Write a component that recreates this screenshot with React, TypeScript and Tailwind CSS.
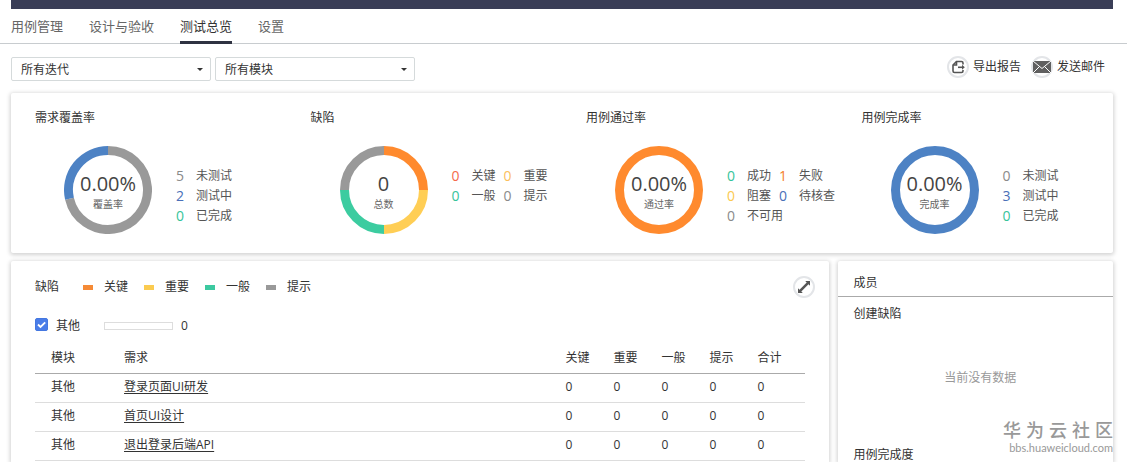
import React, { useState } from 'react'

type Segment = { value: number; color: string }
type LegendItem = { count: number; label: string; color: string }
type Stat = {
  title: string
  value: string
  caption: string
  segments: Segment[]
  legend: LegendItem[]
  twoColumns?: boolean
}

const stats: Stat[] = [
  {
    title: '需求覆盖率',
    value: '0.00%',
    caption: '覆盖率',
    segments: [{ value: 5, color: '#999999' }, { value: 2, color: '#4d82c4' }],
    legend: [
      { count: 5, label: '未测试', color: 'text-[#8a8a8a]' },
      { count: 2, label: '测试中', color: 'text-[#4a6fb8]' },
      { count: 0, label: '已完成', color: 'text-[#36c49a]' },
    ],
  },
  {
    title: '缺陷',
    value: '0',
    caption: '总数',
    segments: [
      { value: 1, color: '#ff8a2e' },
      { value: 1, color: '#ffce55' },
      { value: 1, color: '#3ccca0' },
      { value: 1, color: '#999999' },
    ],
    legend: [
      { count: 0, label: '关键', color: 'text-[#f5694a]' },
      { count: 0, label: '重要', color: 'text-[#fbc05c]' },
      { count: 0, label: '一般', color: 'text-[#36c49a]' },
      { count: 0, label: '提示', color: 'text-[#8a8a8a]' },
    ],
    twoColumns: true,
  },
  {
    title: '用例通过率',
    value: '0.00%',
    caption: '通过率',
    segments: [{ value: 1, color: '#ff8a2e' }],
    legend: [
      { count: 0, label: '成功', color: 'text-[#36c49a]' },
      { count: 1, label: '失败', color: 'text-[#f5802a]' },
      { count: 0, label: '阻塞', color: 'text-[#fbc94f]' },
      { count: 0, label: '待核查', color: 'text-[#4a6fb8]' },
      { count: 0, label: '不可用', color: 'text-[#8a8a8a]' },
    ],
    twoColumns: true,
  },
  {
    title: '用例完成率',
    value: '0.00%',
    caption: '完成率',
    segments: [{ value: 1, color: '#4d82c4' }],
    legend: [
      { count: 0, label: '未测试', color: 'text-[#8a8a8a]' },
      { count: 3, label: '测试中', color: 'text-[#4a6fb8]' },
      { count: 0, label: '已完成', color: 'text-[#36c49a]' },
    ],
  },
]

const tabs = ['用例管理', '设计与验收', '测试总览', '设置']

const levels = [
  { label: '关键', color: 'bg-[#f58a36]' },
  { label: '重要', color: 'bg-[#fbcb50]' },
  { label: '一般', color: 'bg-[#3cc9a0]' },
  { label: '提示', color: 'bg-[#999999]' },
]

const rows = [
  { module: '其他', name: '登录页面UI研发', counts: [0, 0, 0, 0, 0] },
  { module: '其他', name: '首页UI设计', counts: [0, 0, 0, 0, 0] },
  { module: '其他', name: '退出登录后端API', counts: [0, 0, 0, 0, 0] },
]

const RADIUS = 39.5

// point on the ring, clockwise from twelve o'clock
function pointAt(fraction: number) {
  const angle = fraction * 2 * Math.PI
  return `${44 + RADIUS * Math.sin(angle)} ${44 - RADIUS * Math.cos(angle)}`
}

function Donut({ segments }: { segments: Segment[] }) {
  const total = segments.reduce((sum, s) => sum + s.value, 0)
  let start = 0
  return (
    <svg viewBox="0 0 88 88" className="col-start-1 row-start-1 size-[88px]" fill="none" strokeWidth="9" aria-hidden="true">
      {segments.map((s, i) => {
        const share = s.value / total
        if (share === 1) return <circle key={i} cx="44" cy="44" r={RADIUS} stroke={s.color} />
        const from = pointAt(start)
        start += share
        return <path key={i} d={`M${from}A${RADIUS} ${RADIUS} 0 ${share > 0.5 ? 1 : 0} 1 ${pointAt(start)}`} stroke={s.color} />
      })}
    </svg>
  )
}

function StatPanel({ stat }: { stat: Stat }) {
  return (
    <section className="pl-6">
      <h2 className="text-xs leading-4 text-[#333]">{stat.title}</h2>
      <div className="mt-5 flex items-start pl-[29px]">
        <div className="grid shrink-0 place-items-center">
          <Donut segments={stat.segments} />
          <div className="col-start-1 row-start-1 flex flex-col items-center pt-1">
            <span className="text-xl leading-6 text-[#444]">{stat.value}</span>
            <span className="text-[10px] leading-4 text-[#666]">{stat.caption}</span>
          </div>
        </div>
        <ul className={stat.twoColumns ? 'mt-5 ml-6 grid grid-cols-[auto_auto] gap-x-2' : 'mt-5 ml-6 grid'}>
          {stat.legend.map(item => (
            <li key={item.label} className="flex h-5 items-center text-xs text-[#555]">
              <span className={`w-5 text-sm ${item.color}`}>{item.count}</span>
              <span className={item.label === '不可用' ? 'w-6 whitespace-nowrap' : 'whitespace-nowrap'}>{item.label}</span>
            </li>
          ))}
        </ul>
      </div>
    </section>
  )
}

function Dropdown({ label }: { label: string }) {
  return (
    <div className="grid w-[200px] items-center">
      <select aria-label={label} className="col-start-1 row-start-1 h-6 appearance-none rounded-xs border border-[#d5dadb] bg-white pt-px pl-[9px] text-xs text-[#333]">
        <option>{label}</option>
      </select>
      <svg viewBox="0 0 6 3" className="pointer-events-none col-start-1 row-start-1 mr-2 h-[3px] w-[6px] justify-self-end" aria-hidden="true">
        <path d="M0 0h6L3 3z" fill="#333" />
      </svg>
    </div>
  )
}

function IconCircle({ children }: { children: React.ReactNode }) {
  return (
    <span className="flex size-[22px] items-center justify-center rounded-full border-2 border-[#e3e5e8] bg-white">{children}</span>
  )
}

export default function App() {
  const [active, setActive] = useState('测试总览')
  const [checked, setChecked] = useState(true)

  return (
    <div className="flex h-screen flex-col overflow-hidden bg-white font-['Open_Sans','Noto_Sans_CJK_SC',sans-serif] text-[#333]">
      <div className="mr-[14px] ml-[11px] h-[9px] shrink-0 bg-[#3a3e57]" />
      <nav className="flex h-[35px] shrink-0 gap-[26px] border-b border-[#c8cccf] pl-[11px]">
        {tabs.map(tab => (
          <button key={tab} onClick={() => setActive(tab)}
            className={tab === active
              ? '-mb-px border-b-3 border-[#2f3241] pt-1 text-[13px] text-[#333]'
              : '-mb-px border-b-3 border-transparent pt-1 text-[13px] text-[#666]'}>
            {tab}
          </button>
        ))}
      </nav>

      <div className="flex min-h-0 flex-1 flex-col pr-[14px] pl-[11px]">
        <div className="mt-[13px] flex h-6 items-start justify-between">
          <div className="flex gap-1">
            <Dropdown label="所有迭代" />
            <Dropdown label="所有模块" />
          </div>
          <div className="-mt-[2px] flex gap-[10px] pr-2">
            <button className="flex items-center gap-1 text-xs leading-6">
              <IconCircle>
                <svg viewBox="0 0 14 14" className="size-[14px] shrink-0" fill="none" stroke="#555" strokeWidth="1.6" aria-hidden="true">
                  <path d="M12 4.5V3q0-1.5-1.5-1.5H5.5L2 5v6q0 1.5 1.5 1.5h7Q12 12.500 12 11v-1" />
                  <path d="M5.500 1.500V5H2" />
                  <path d="M7 7.300h5" />
                  <path d="M11 4.800L13.800 7.300L11 9.800z" fill="#555" stroke="none" />
                </svg>
              </IconCircle>
              导出报告
            </button>
            <button className="flex items-center gap-1 text-xs leading-6">
              <IconCircle>
                <svg viewBox="0 0 18 12" className="h-[12px] w-[18px] shrink-0" aria-hidden="true">
                  <rect width="18" height="12" fill="#606060" />
                  <path d="M0 0L9 7.500L18 0M0 12L6.500 5.500M18 12L11.500 5.500" fill="none" stroke="#fff" />
                </svg>
              </IconCircle>
              发送邮件
            </button>
          </div>
        </div>

        <div className="mt-3 grid h-40 shrink-0 grid-cols-4 rounded-xs bg-white pt-[17px] shadow-[0_1px_4px_1px_rgba(0,0,0,0.18)]">
          {stats.map(stat => <StatPanel key={stat.title} stat={stat} />)}
        </div>

        <div className="mt-2 flex min-h-0 flex-1 gap-[9px]">
          <section className="min-w-0 flex-1 rounded-t-xs bg-white px-6 pt-[15px] shadow-[0_1px_4px_1px_rgba(0,0,0,0.18)]">
            <div className="flex items-center text-xs">
              <h2 className="mr-6">缺陷</h2>
              <ul className="flex gap-4">
                {levels.map(level => (
                  <li key={level.label} className="flex items-center gap-[11px]">
                    <span className={`h-[5px] w-[10px] ${level.color}`} />
                    {level.label}
                  </li>
                ))}
              </ul>
              <button aria-label="展开" className="-mr-[10px] ml-auto">
                <IconCircle>
                  <svg viewBox="0 0 14 14" className="size-[14px] shrink-0" fill="#555" aria-hidden="true">
                    <path d="M8.200 1H13v4.800L11.500 4.300L4.300 11.500L5.800 13H1V8.200L2.500 9.700L9.700 2.500z" />
                  </svg>
                </IconCircle>
              </button>
            </div>

            <div className="mt-[18px] flex h-5 items-center text-xs">
              <label className="flex items-center gap-2">
                <span className="mb-1 grid size-[13px]">
                  <input type="checkbox" checked={checked} onChange={e => setChecked(e.target.checked)}
                    className="col-start-1 row-start-1 size-[13px] appearance-none rounded-xs border border-[#4477e0] checked:bg-[#4a7de8]" />
                  {checked && (
                    <svg viewBox="0 0 13 13" className="pointer-events-none col-start-1 row-start-1 size-[13px]" fill="none" stroke="#fff" strokeWidth="1.8" aria-hidden="true">
                      <path d="M3 6.500L5.500 9L10.200 4.300" />
                    </svg>
                  )}
                </span>
                其他
              </label>
              <span className="mr-2 ml-6 h-2 w-[69px] border border-[#ddd]" />
              0
            </div>

            <table className="mt-[7px] w-full table-fixed text-left text-xs">
              <colgroup>
                <col className="w-[73px]" />
                <col />
                <col className="w-12" />
                <col className="w-12" />
                <col className="w-12" />
                <col className="w-12" />
                <col className="w-[63px]" />
              </colgroup>
              <thead>
                <tr className="h-[30px] border-b border-[#aaa]">
                  {['模块', '需求', '关键', '重要', '一般', '提示', '合计'].map(h => (
                    <th key={h} className="pl-4 font-normal whitespace-nowrap">{h}</th>
                  ))}
                </tr>
              </thead>
              <tbody>
                {rows.map(row => (
                  <tr key={row.name} className="h-[29px] border-b border-[#ddd]">
                    <td className="pb-[2px] pl-4">{row.module}</td>
                    <td className="pb-[2px] pl-4"><a href="#" className="underline underline-offset-2">{row.name}</a></td>
                    {row.counts.map((count, i) => <td key={i} className="pb-[2px] pl-4">{count}</td>)}
                  </tr>
                ))}
              </tbody>
            </table>
          </section>

          <section className="relative w-1/4 rounded-t-xs bg-white text-xs leading-4 shadow-[0_1px_4px_1px_rgba(0,0,0,0.18)]">
            <h2 className="border-b border-[#aaa] px-4 pt-[14px] pb-[5px]">成员</h2>
            <h3 className="mt-[9px] px-4">创建缺陷</h3>
            <p className="mt-12 pl-[10px] text-center text-[#999]">当前没有数据</p>
            <h3 className="mt-[61px] px-4">用例完成度</h3>
            <div className="absolute right-0 bottom-[7px] flex flex-col items-end text-[#999]">
              <span className="font-['Liberation_Sans','Noto_Sans_CJK_SC',sans-serif] text-lg leading-5 font-medium whitespace-pre">华 为 云 社 区</span>
              <span className="font-[Lato,sans-serif] text-[11px] leading-[14px]">bbs.huaweicloud.com</span>
            </div>
          </section>
        </div>
      </div>
    </div>
  )
}
